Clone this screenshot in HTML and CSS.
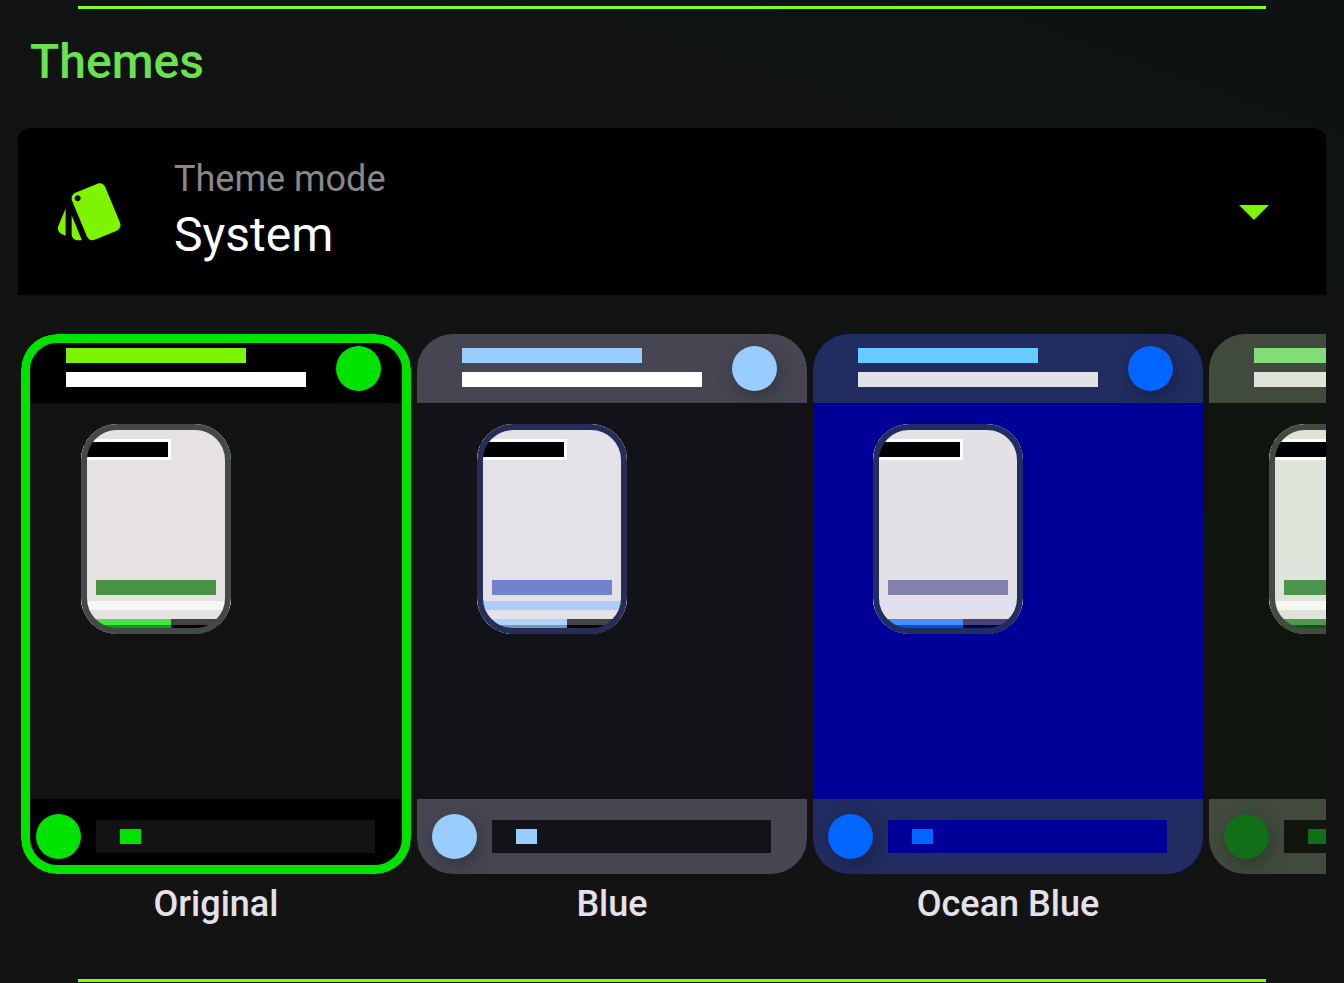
FILE: index.html
```html
<!DOCTYPE html>
<html lang="en">
<head>
<meta charset="utf-8">
<title>Themes</title>
<link rel="stylesheet" href="styles.css">
</head>
<body>
<main class="settings">
  <hr class="divider">
  <h2 class="title">Themes</h2>

  <div class="mode">
    <svg class="mode-icon" viewBox="0 0 24 24" aria-hidden="true"><path d="M2.53 19.65l1.34.56v-9.03l-2.43 5.86c-.41 1.02.08 2.19 1.09 2.61zm19.5-3.7L17.07 3.98c-.31-.75-1.04-1.21-1.81-1.23-.26 0-.53.04-.79.15L7.1 5.95c-.75.31-1.21 1.03-1.23 1.8-.01.27.04.54.15.8l4.96 11.97c.31.76 1.05 1.22 1.83 1.23.26 0 .52-.05.77-.15l7.36-3.05c1.02-.42 1.51-1.59 1.09-2.6zM7.88 8.75c-.55 0-1-.45-1-1s.45-1 1-1 1 .45 1 1-.45 1-1 1zm-2 11c0 1.1.9 2 2 2h1.45l-3.45-8.34v6.34z"/></svg>
    <div class="mode-field">
      <label class="mode-label" for="mode">Theme mode</label>
      <select class="mode-select" id="mode"><option>System</option></select>
    </div>
    <svg class="mode-icon" viewBox="0 0 24 24" aria-hidden="true"><path d="M7 10l5 5 5-5z"/></svg>
  </div>

  <div class="themes" role="radiogroup" aria-label="Themes">
    <label class="theme original">
      <input class="theme-radio" type="radio" name="theme" checked>
      <span class="card">
        <span class="card-head"><span class="lines"><span class="line-a"></span><span class="line-b"></span></span><span class="dot"></span></span>
        <span class="card-body"><span class="bubble"><span class="tag"></span><span class="stripe"></span><span class="band"></span><span class="progress"><span class="done"></span><span class="rest"></span></span></span></span>
        <span class="card-foot"><span class="dot"></span><span class="entry"><span class="cursor"></span></span></span>
      </span>
      <span class="name">Original</span>
    </label>
    <label class="theme blue">
      <input class="theme-radio" type="radio" name="theme">
      <span class="card">
        <span class="card-head"><span class="lines"><span class="line-a"></span><span class="line-b"></span></span><span class="dot"></span></span>
        <span class="card-body"><span class="bubble"><span class="tag"></span><span class="stripe"></span><span class="band"></span><span class="progress"><span class="done"></span><span class="rest"></span></span></span></span>
        <span class="card-foot"><span class="dot"></span><span class="entry"><span class="cursor"></span></span></span>
      </span>
      <span class="name">Blue</span>
    </label>
    <label class="theme ocean">
      <input class="theme-radio" type="radio" name="theme">
      <span class="card">
        <span class="card-head"><span class="lines"><span class="line-a"></span><span class="line-b"></span></span><span class="dot"></span></span>
        <span class="card-body"><span class="bubble"><span class="tag"></span><span class="stripe"></span><span class="band"></span><span class="progress"><span class="done"></span><span class="rest"></span></span></span></span>
        <span class="card-foot"><span class="dot"></span><span class="entry"><span class="cursor"></span></span></span>
      </span>
      <span class="name">Ocean Blue</span>
    </label>
    <label class="theme green">
      <input class="theme-radio" type="radio" name="theme" aria-label="Green">
      <span class="card">
        <span class="card-head"><span class="lines"><span class="line-a"></span><span class="line-b"></span></span><span class="dot"></span></span>
        <span class="card-body"><span class="bubble"><span class="tag"></span><span class="stripe"></span><span class="band"></span><span class="progress"><span class="done"></span><span class="rest"></span></span></span></span>
        <span class="card-foot"><span class="dot"></span><span class="entry"><span class="cursor"></span></span></span>
      </span>
    </label>
  </div>
  <hr class="divider">
</main>
</body>
</html>
```

FILE: styles.css
```css
* { box-sizing: border-box; }

body {
  margin: 0;
  background: #131313 linear-gradient(200deg, #0e1213 0%, #111312 30%, #131313 55%);
  color: #e6e1e9;
  font-family: Roboto, "Noto Sans", sans-serif;
}

.settings { padding: 6px 18px 1px; }

.divider {
  height: 3px;
  margin: 0 60px;
  border: 0;
  background: #80ff18;
}

.title {
  margin: 25px 12px 38px;
  color: #69e151;
  font-size: 48px;
  font-weight: 500;
  line-height: 56px;
}

/* Theme mode drop-down */
.mode {
  display: flex;
  align-items: center;
  gap: 48px;
  padding: 24px 36px 25px;
  border-radius: 12px 12px 0 0;
  background: #000;
}
.mode-icon { flex: none; width: 72px; height: 72px; fill: #7df500; }
.mode-field { display: flex; flex: 1; flex-direction: column; padding-top: 6px; }
.mode-label { color: #8a8886; font-size: 36px; line-height: 42px; }
.mode-select {
  height: 70px;
  padding: 0;
  border: 0;
  appearance: none;
  background: none;
  color: #fff;
  font: 48px/70px Roboto, "Noto Sans", sans-serif;
}

/* Theme previews */
.themes {
  display: flex;
  gap: 6px;
  margin-bottom: 54px;
  padding: 39px 0 0 3px;
  overflow: hidden;
}
.theme { position: relative; flex: none; width: 390px; }
.theme-radio { position: absolute; margin: 0; opacity: 0; }
.card {
  position: relative;
  display: flex;
  flex-direction: column;
  height: 540px;
  border-radius: 36px;
  overflow: hidden;
  background: var(--page);
}
.theme-radio:checked + .card::after {
  content: "";
  position: absolute;
  inset: 0;
  border: 9px solid var(--accent);
  border-radius: 36px;
}
.card-head {
  display: flex;
  justify-content: space-between;
  height: 69px;
  padding: 12px 30px 0 45px;
  background: var(--bar);
}
.lines { display: flex; flex-direction: column; gap: 9px; padding-top: 2px; }
.line-a { width: 180px; height: 15px; background: var(--line-a); }
.line-b { width: 240px; height: 15px; background: var(--line-b); }
.dot {
  flex: none;
  width: 45px;
  height: 45px;
  border-radius: 50%;
  background: var(--accent);
  box-shadow: 3px 6px 18px rgba(0, 0, 0, 0.25);
}
.card-body { flex: 1; padding: 21px 60px; }
.bubble {
  position: relative;
  display: flex;
  flex-direction: column;
  width: 150px;
  height: 210px;
  padding-top: 15px;
  border-radius: 36px;
  overflow: hidden;
  background: var(--bubble);
}
.bubble::after {
  content: "";
  position: absolute;
  inset: 0;
  border: 6px solid var(--edge);
  border-radius: 36px;
}
.tag { width: 90px; height: 21px; border: 3px solid #fff; background: #000; }
.stripe { height: 15px; margin: 120px 15px 6px; background: var(--stripe); }
.band { height: 9px; background: var(--band); }
.progress { display: flex; flex: 1; margin-top: 9px; }
.done { width: 90px; background: linear-gradient(var(--done) 6px, var(--done-low) 6px); }
.rest { flex: 1; background: linear-gradient(var(--rest) 6px, var(--rest-low) 6px); }
.card-foot {
  display: flex;
  align-items: center;
  gap: 15px;
  height: 75px;
  padding: 0 36px 0 15px;
  background: var(--bar);
}
.entry { z-index: 1; flex: 1; height: 33px; padding: 9px 24px; background: var(--page); }
.cursor { display: block; width: 21px; height: 15px; background: var(--accent); }
.name {
  display: block;
  padding-top: 9px;
  font-size: 36px;
  font-weight: 500;
  line-height: 42px;
  text-align: center;
}

.original {
  --page: #131313; --bar: #000; --accent: #00e300; --line-a: #7df500; --line-b: #fff;
  --bubble: #e6e2e1; --edge: #444848; --stripe: #489245; --band: #f6f6f6;
  --done: #47e344; --done-low: #05a505; --rest: #444344; --rest-low: #020202;
}
.blue {
  --page: #121318; --bar: #454652; --accent: #99ccff; --line-a: #99ccff; --line-b: #fff;
  --bubble: #e4e1e9; --edge: #262e57; --stripe: #7280cd; --band: #afcbfa;
  --done: #b1d3f8; --done-low: #7397bd; --rest: #454547; --rest-low: #020202;
}
.ocean {
  --page: #000099; --bar: #212c60; --accent: #0066ff; --line-a: #66ccff; --line-b: #e4e1e6;
  --bubble: #e4e1e6; --edge: #212c60; --stripe: #8181ab; --band: #dfdff8;
  --done: #458df8; --done-low: #004ee5; --rest: #454379; --rest-low: #000055;
}
.green {
  --page: #10150e; --bar: #404a3d; --accent: #117017; --line-a: #82dd77; --line-b: #dfe4da;
  --bubble: #dfe4da; --edge: #424b40; --stripe: #4c934d; --band: #f5f7f3;
  --done: #4e9850; --done-low: #0b5911; --rest: #444744; --rest-low: #020202;
}
```
